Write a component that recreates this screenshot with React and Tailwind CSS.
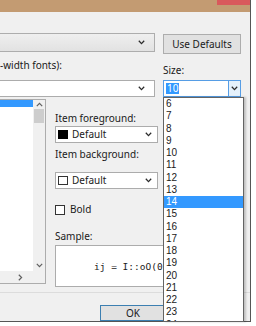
import React from 'react';

const sizes = [6, 7, 8, 9, 10, 11, 12, 13, 14, 15, 16, 17, 18, 19, 20, 21, 22, 23, 24];

function Chevron({ className = '' }) {
  return (
    <svg width="7" height="5" viewBox="0 0 7 5" className={className}>
      <path d="M0.8 0.8 L3.5 3.6 L6.2 0.8" fill="none" stroke="#2b2b2b" strokeWidth="1.3" />
    </svg>
  );
}

function Combo({ children, className = '' }) {
  return (
    <div className={`flex items-center justify-between h-[17px] bg-white border border-[#acacac] pr-[5px] ${className}`}>
      <div className="flex items-center gap-[4px] pl-[2px]">{children}</div>
      <Chevron />
    </div>
  );
}

export default function App() {
  return (
    <div className="w-[256px] h-[326px] bg-white overflow-hidden relative font-['Noto_Sans','Liberation_Sans',sans-serif] text-[10px] leading-[13px] text-[#1a1a1a]">
      {/* window */}
      <div className="w-[251px] h-[322px] bg-[#f0f0f0] border-r border-b border-[#555] flex flex-col">
        {/* title bar */}
        <div className="h-[12px] shrink-0 bg-[#c39b72] flex justify-end">
          <div className="w-[33px] h-[5px] bg-[#d9595c]" />
        </div>

        {/* top rows */}
        <div className="flex pt-[21px]">
          <div className="w-[155px] flex flex-col">
            <div className="h-[19px] flex items-center justify-end pr-[9px] bg-gradient-to-b from-[#efefef] to-[#e2e2e2] border border-[#adadad] border-l-0">
              <Chevron />
            </div>
            <div className="mt-[7px] h-[13px] whitespace-nowrap">-width fonts):</div>
            <Combo className="mt-[8px] border-l-0 pr-[9px]" />
          </div>
          <div className="ml-[8px] w-[78px] flex flex-col">
            <div className="mt-[1px] h-[20px] flex items-center justify-center bg-[#e1e1e1] border border-[#adadad]">
              Use Defaults
            </div>
            <div className="mt-[10px] h-[13px]">Size:</div>
            <div className="mt-[3px] h-[17px] flex bg-white border border-[#569de5]">
              <div className="flex-1 flex items-center pl-[2px]">
                <span className="bg-[#3399ff] text-white px-[1px] leading-[11px]">10</span>
              </div>
              <div className="w-[12px] flex items-center justify-center bg-[#e5f1fb] border-l border-[#569de5]">
                <Chevron />
              </div>
            </div>
          </div>
        </div>

        {/* lower section */}
        <div className="flex">
          {/* display items list */}
          <div className="mt-[2px] w-[46px] h-[185px] bg-white border border-[#acacac] border-l-0 flex flex-col">
            <div className="flex-1 flex">
              <div className="flex-1">
                <div className="h-[7px] bg-[#3399ff]" />
              </div>
              <div className="w-[12px] bg-[#f0f0f0] flex flex-col items-center">
                <svg width="7" height="5" viewBox="0 0 7 5" className="mt-[2px]">
                  <path d="M0.8 4.2 L3.5 1.4 L6.2 4.2" fill="none" stroke="#606060" strokeWidth="1.2" />
                </svg>
                <div className="mt-[2px] w-[10px] h-[14px] bg-[#cdcdcd]" />
                <div className="flex-1" />
                <svg width="7" height="5" viewBox="0 0 7 5" className="mb-[3px]">
                  <path d="M0.8 0.8 L3.5 3.6 L6.2 0.8" fill="none" stroke="#606060" strokeWidth="1.2" />
                </svg>
              </div>
            </div>
            <div className="h-[12px] flex">
              <div className="flex-1 bg-[#f0f0f0] flex items-center justify-end pr-[10px]">
                <svg width="5" height="7" viewBox="0 0 5 7">
                  <path d="M0.8 0.8 L3.6 3.5 L0.8 6.2" fill="none" stroke="#606060" strokeWidth="1.2" />
                </svg>
              </div>
              <div className="w-[12px] bg-[#f0f0f0]" />
            </div>
          </div>

          {/* item settings */}
          <div className="ml-[9px] flex flex-col">
            <div className="mt-[15px] h-[13px] whitespace-nowrap">Item foreground:</div>
            <Combo className="mt-[1px] w-[103px]">
              <div className="w-[10px] h-[9px] bg-black" />
              <span>Default</span>
            </Combo>
            <div className="mt-[5px] h-[13px] whitespace-nowrap">Item background:</div>
            <Combo className="mt-[11px] w-[103px]">
              <div className="w-[10px] h-[9px] bg-white border border-[#333]" />
              <span>Default</span>
            </Combo>
            <div className="mt-[14px] h-[13px] flex items-center gap-[5px]">
              <div className="w-[10px] h-[10px] bg-white border border-[#333]" />
              <span>Bold</span>
            </div>
            <div className="mt-[14px] h-[13px]">Sample:</div>
            <div className="mt-[2px] w-[185px] h-[42px] bg-white border border-[#acacac] flex items-center pl-[38px]">
              <span className="font-['DejaVu_Sans_Mono',monospace] text-[9.5px] whitespace-pre">ij = I::oO(0</span>
            </div>
          </div>
        </div>

        {/* button bar */}
        <div className="mt-[5px] flex-1 border-t border-[#dcdcdc] flex items-start">
          <div className="ml-[100px] mt-[12px] w-[66px] h-[16px] bg-[#e1e1e1] border border-[#3c7fb1] flex items-center justify-center">
            OK
          </div>
        </div>
      </div>

      {/* size dropdown list */}
      <div className="absolute left-[163px] top-[97px] w-[81px] h-[225px] bg-white border border-[#646464] overflow-hidden shadow-[2px_0_2px_rgba(0,0,0,0.2)] font-['Liberation_Sans',sans-serif]">
        {sizes.map((s) => (
          <div
            key={s}
            className={`h-[12.25px] leading-[12px] pl-[2px] ${s === 14 ? 'bg-[#3399ff] text-white' : ''}`}
          >
            {s}
          </div>
        ))}
      </div>
    </div>
  );
}
